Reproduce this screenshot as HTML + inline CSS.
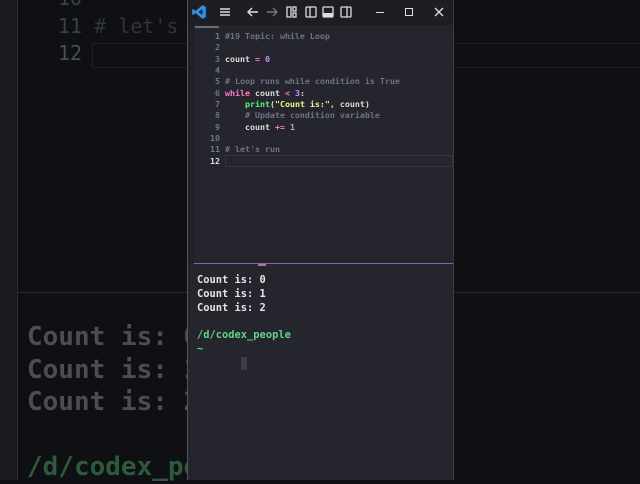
<!DOCTYPE html>
<html><head><style>
*{margin:0;padding:0;box-sizing:border-box}
body{width:640px;height:480px;overflow:hidden;background:#0f1013;position:relative;font-family:"DejaVu Sans Mono","Liberation Mono",monospace}
.a{position:absolute;white-space:pre}
.win{position:absolute;left:187px;top:0;width:267px;height:480px;background:#25262d;border-left:1px solid #55565c;border-right:1px solid #3a3b40;overflow:hidden}
.tb{position:absolute;left:0;top:0;width:100%;height:25px;background:#1d1e24}
.ed .a{font-size:8.3px;line-height:11.35px;font-weight:bold}
.ln{color:#6e7390;text-align:right;width:20px}
.t .a{font-size:10.4px;color:#e6e6e6;font-weight:bold}
</style></head><body>
<div class="a" style="left:0;top:0;width:18px;height:480px;background:#1a1b1f;border-right:1px solid #2a2b30"></div>
<div class="a" style="left:18px;top:292px;width:622px;height:1px;background:#2a283a"></div>
<div class="a" style="left:454px;top:43px;width:186px;height:1px;background:#1c1d22"></div>
<div class="a" style="left:454px;top:67px;width:186px;height:1px;background:#1c1d22"></div>
<div class="a" style="font-size:20px;color:#3c3f4e;left:58px;top:-14px">10</div>
<div class="a" style="font-size:20px;color:#3c3f4e;left:58px;top:14px">11 <span style="color:#303240"># let's</span></div>
<div class="a" style="font-size:20px;color:#4a4d5c;left:58px;top:41px">12</div>
<div class="a" style="left:92px;top:43px;width:95px;height:25px;border:1px solid #1e1f24;border-right:none"></div>
<div class="a" style="font-size:26px;font-weight:bold;color:#4c4d50;left:27px;top:321px;line-height:32.6px">Count is: 0
Count is: 1
Count is: 2

<span style="color:#2d5a3c">/d/codex_pe</span></div>

<div class="win">
 <div class="tb">
  <svg class="a" style="left:3px;top:4px" width="16" height="16" viewBox="0 0 14 14"><path d="M10 1 L13 2.5 V11.5 L10 13 L4 8 L2 9.5 L1 9 V5 L2 4.5 L4 6 Z M10 4.5 L6.5 7 L10 9.5 Z" fill="#2f8fe0" fill-rule="evenodd"/></svg>
  <svg class="a" style="left:32px;top:7px" width="10" height="10"><path d="M0 2h10M0 5h10M0 8h10" stroke="#ddd" stroke-width="1.4"/></svg>
  <svg class="a" style="left:59px;top:7px" width="12" height="10"><path d="M11 5H1M5 1L1 5L5 9" stroke="#ddd" stroke-width="1.4" fill="none"/></svg>
  <svg class="a" style="left:78px;top:7px" width="12" height="10"><path d="M1 5H11M7 1L11 5L7 9" stroke="#777" stroke-width="1.4" fill="none"/></svg>
  <svg class="a" style="left:98px;top:6px" width="72" height="12"><g fill="none" stroke="#ddd" stroke-width="1.3"><rect x="1" y="1" width="4" height="10"/><rect x="7" y="1" width="3" height="4"/><rect x="7" y="7" width="3" height="4"/><rect x="20" y="1" width="10" height="10" rx="1"/><path d="M24 1v10"/><rect x="37" y="1" width="10" height="10" rx="1"/><rect x="55" y="1" width="10" height="10" rx="1"/><path d="M61 1v10"/></g><rect x="37" y="7" width="10" height="4" fill="#ddd"/></svg>
  <div class="a" style="left:188px;top:12px;width:8px;height:1.3px;background:#ddd"></div>
  <div class="a" style="left:217px;top:8px;width:8px;height:8px;border:1.3px solid #ddd"></div>
  <svg class="a" style="left:246px;top:7px" width="10" height="10"><path d="M1 1L9 9M9 1L1 9" stroke="#ddd" stroke-width="1.4"/></svg>
 </div>
 <div class="a" style="left:0;top:25px;width:6px;height:238px;background:#202127"></div>
 <div class="a" style="left:7px;top:26px;width:24px;height:2px;background:#6a6c75"></div>
 <div class="ed">
  <div class="a ln" style="left:12px;top:31px;line-height:11.35px">1
2
3
4
5
6
7
8
9
10
11
<span style="color:#ddd">12</span></div>
  <div class="a" style="left:37px;top:155px;width:228px;height:12px;border:1px solid #34353d"></div>
  <div class="a" style="left:37px;top:31px;color:#ddd"><span style="color:#6f7186">#19 Topic: while Loop</span>

count <span style="color:#ff79c6">=</span> <span style="color:#bd93f9">0</span>

<span style="color:#6f7186"># Loop runs while condition is True</span>
<span style="color:#ff79c6">while</span> count <span style="color:#ff79c6">&lt;</span> <span style="color:#bd93f9">3</span>:
    <span style="color:#50fa7b">print</span>(<span style="color:#f1fa8c">"Count is:"</span>, count)
    <span style="color:#6f7186"># Update condition variable</span>
    count <span style="color:#ff79c6">+=</span> <span style="color:#bd93f9">1</span>

<span style="color:#6f7186"># let's run</span>
</div>
 </div>
 <div class="a" style="left:6px;top:263px;width:261px;height:1px;background:#7a6aa8"></div>
 <div class="a" style="left:70px;top:264px;width:8px;height:2px;background:#c07090"></div>
 <div class="t">
  <div class="a" style="left:9px;top:274px;line-height:13.8px">Count is: 0
Count is: 1
Count is: 2

<span style="color:#5fd38a">/d/codex_people</span>
<span style="color:#5fd38a">~</span></div>
 </div>
 <div class="a" style="left:53px;top:357px;width:6px;height:13px;background:#3e3f46"></div>
</div>
</body></html>
